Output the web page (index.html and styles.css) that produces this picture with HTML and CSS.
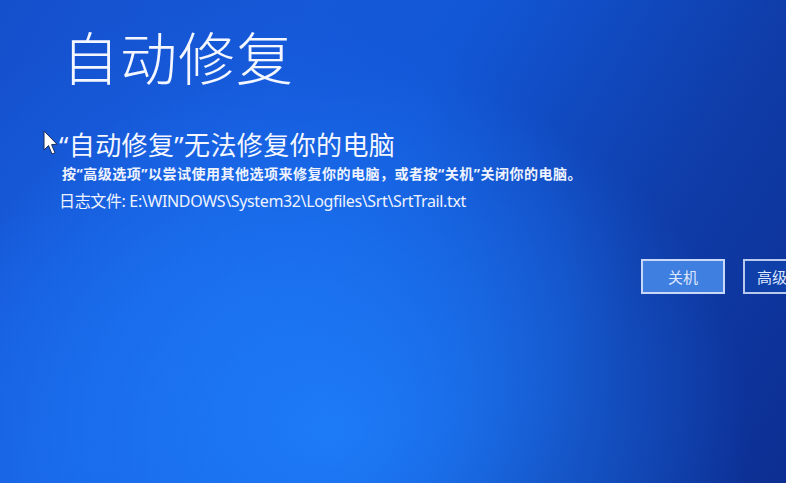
FILE: index.html
```html
<!DOCTYPE html>
<html lang="zh-CN">
<head>
<meta charset="utf-8">
<title>自动修复</title>
<link rel="stylesheet" href="styles.css">
</head>
<body>
<div class="screen">
  <h1 class="title">自动修复</h1>
  <div class="heading-row">
    <svg class="cursor" width="15" height="26" viewBox="0 0 15 26">
      <path d="M1 1 L1 20 L5.5 15.5 L9 24 L12 22.8 L8.6 14.6 L14 14.2 Z" fill="#ffffff" stroke="#1b2a55" stroke-width="1"/>
    </svg>
    <h2 class="heading">“自动修复”无法修复你的电脑</h2>
  </div>
  <p class="desc">按“高级选项”以尝试使用其他选项来修复你的电脑，或者按“关机”关闭你的电脑。</p>
  <p class="log">日志文件: E:\WINDOWS\System32\Logfiles\Srt\SrtTrail.txt</p>
  <div class="buttons">
    <button class="btn btn-primary">关机</button>
    <button class="btn btn-secondary">高级选项</button>
  </div>
</div>
</body>
</html>
```
FILE: styles.css
```css
html, body {
  margin: 0;
  padding: 0;
  width: 786px;
  height: 483px;
  overflow: hidden;
}
body {
  background:
    radial-gradient(ellipse 420px 360px at 330px 430px, rgba(30,125,250,0.95) 0%, rgba(30,125,250,0) 100%),
    radial-gradient(ellipse 380px 300px at 250px 300px, rgba(25,105,235,0.7) 0%, rgba(25,105,235,0) 100%),
    radial-gradient(ellipse 300px 260px at 60px 470px, rgba(24,100,230,0.8) 0%, rgba(24,100,230,0) 100%),
    linear-gradient(120deg, #1550cc 0%, #1558d8 30%, #1257d6 45%, #0f3ca8 75%, #0c2e92 100%);
  font-family: "Noto Sans", "Noto Sans CJK SC", sans-serif;
  color: #ffffff;
}
.screen {
  padding: 20px 0 0 62px;
  width: 900px;
}
.title {
  margin: 0;
  font-family: "Noto Sans CJK SC", "Noto Sans", sans-serif;
  font-size: 57px;
  font-weight: 300;
  line-height: 70px;
  letter-spacing: 1px;
  color: #f4f7ff;
}
.heading-row {
  display: flex;
  align-items: flex-start;
  margin: 38px 0 0 -19px;
}
.cursor {
  margin-top: 2px;
  margin-right: 1px;
  flex: none;
}
.heading {
  margin: 0;
  font-family: "Noto Sans", "Noto Sans CJK SC", sans-serif;
  font-size: 26px;
  font-weight: 400;
  line-height: 34px;
  letter-spacing: 0.4px;
  color: #f4f7ff;
}
.desc {
  margin: 0;
  padding-top: 1px;
  font-size: 14px;
  font-weight: 700;
  line-height: 22px;
  letter-spacing: 0.5px;
  color: #eef3ff;
}
.log {
  margin: 5px 0 0 -3px;
  font-size: 16px;
  font-weight: 400;
  line-height: 22px;
  letter-spacing: -0.35px;
  color: #eef3ff;
}
.buttons {
  display: flex;
  gap: 18px;
  margin: 47px 0 0 579px;
}
.btn {
  width: 84px;
  height: 35px;
  box-sizing: border-box;
  font-family: "Noto Sans CJK SC", "Noto Sans", sans-serif;
  font-size: 15px;
  color: #dfe8ff;
  padding: 0;
  white-space: nowrap;
  overflow: hidden;
}
.btn-primary {
  background: #3f7fe0;
  border: 2px solid #c9d8f6;
}
.btn-secondary {
  background: #0f3fa8;
  border: 2px solid #b9c9ee;
  text-align: left;
  padding-left: 12px;
}
```
